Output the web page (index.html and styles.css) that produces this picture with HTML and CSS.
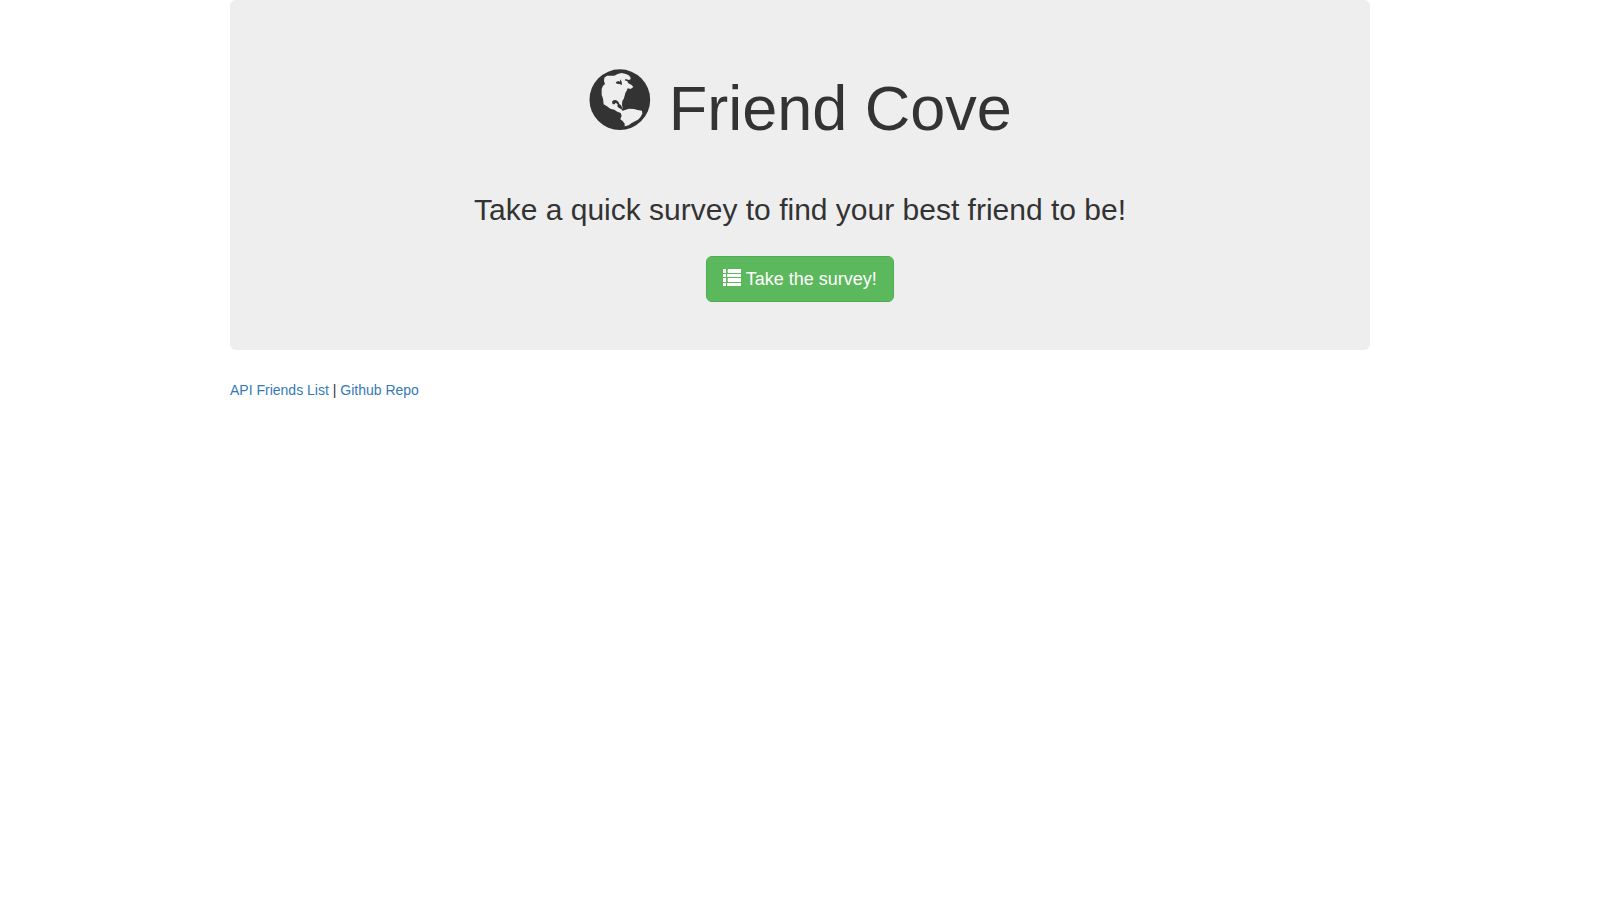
FILE: index.html
```html
<!DOCTYPE html>
<html lang="en">
<head>
<meta charset="utf-8">
<meta name="viewport" content="width=device-width, initial-scale=1">
<title>Friend Cove</title>
<link rel="stylesheet" href="styles.css">
</head>
<body>
<div class="container">
  <main class="jumbotron">
    <h1 class="title">
      <svg class="icon-globe" viewBox="24 23 189 189" aria-hidden="true">
        <circle class="globe-sea" cx="119.500" cy="118" r="91"/>
        <path class="globe-land" d="M73 52L81 46L103 46L113 41L124 38L135 40L145 44L151 50L152 57L146 59L137 56L134 60L142 63L145 69L155 74L160 80L152 86L143 84L140 91L136 98L134 106L131 116L127 122L126 133L128 143L124 148L128 151L135 149L147 145L162 146L173 149L186 151L187 160L181 171L174 178L165 183L154 189L146 195L134 198L134 190L128 182L121 177L125 166L122 158L112 154L103 148L91 145L81 138L71 132L69 115L65 103L65 86L69 76L75 71L72 63Z"/>
        <path class="globe-sea" d="M107 66L115 62L120 64L121 57L125 64L126 74L118 71L110 70ZM96 124L100 120L108 119L115 124L118 131L123 135L127 143L124 147L116 142L112 138L113 132L107 127L104 132L98 132Z"/>
      </svg>
      Friend Cove
    </h1>
    <h2 class="lead">Take a quick survey to find your best friend to be!</h2>
    <button class="btn" type="button">
      <svg class="icon-list" viewBox="0 0 18 17" aria-hidden="true">
        <path d="M0 0h3v4H0zM5 0h13v4H5q-1-2 0-4zM0 5h3v3H0zM4 5h14v3H4zM0 9h3v4H0zM5 9h13v4H5q-1-2 0-4zM0 14h3v3H0zM4 14h14v3H4z"/>
      </svg>
      Take the survey!
    </button>
  </main>
  <footer class="footer">
    <a href="#friends">API Friends List</a> | <a href="#repo">Github Repo</a>
  </footer>
</div>
</body>
</html>
```
FILE: styles.css
```css
* {
  box-sizing: border-box;
}

body {
  margin: 0;
  background: #fff;
  color: #333;
  font: 14px/20px "Liberation Sans", Arial, sans-serif;
}

.container {
  max-width: 1170px;
  margin: 0 auto;
  padding: 0 15px;
}

.jumbotron {
  padding: 68px 60px 48px;
  margin-bottom: 30px;
  border-radius: 6px;
  background: #eee;
  text-align: center;
}

.title {
  margin: 0 0 47px;
  font-size: 63px;
  font-weight: 500;
  line-height: 75px;
}

.icon-globe {
  width: 63px;
  height: 63px;
  vertical-align: -1px;
}

.globe-sea {
  fill: #333;
}

.globe-land {
  fill: #eee;
}

.lead {
  margin: 0 0 30px;
  font-size: 30px;
  font-weight: 500;
  line-height: 33px;
}

.btn {
  padding: 10px 16px;
  border: 1px solid #4cae4c;
  border-radius: 6px;
  background: #5cb85c;
  color: #fff;
  font-family: inherit;
  font-size: 18px;
  line-height: 24px;
  vertical-align: middle;
  cursor: pointer;
}

.icon-list {
  width: 18px;
  height: 17px;
  fill: #fff;
  vertical-align: -1px;
}

.footer a {
  color: #337ab7;
  text-decoration: none;
}

.footer a:hover {
  text-decoration: underline;
}
```
